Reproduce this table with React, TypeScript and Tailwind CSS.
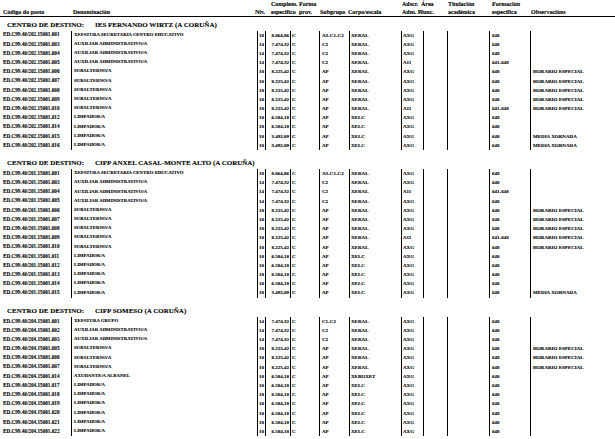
import React from "react";

type R = [string, string, string, string, string, string, string, string, string];

const S1: R[] = [
  ["001", "XEFATURA SECRETARÍA CENTRO EDUCATIVO", "18", "8.064,86", "A3-C1-C2", "XERAL", "AXG", "648", ""],
  ["003", "AUXILIAR ADMINISTRATIVO/A", "14", "7.474,32", "C2", "XERAL", "AXG", "648", ""],
  ["004", "AUXILIAR ADMINISTRATIVO/A", "14", "7.474,32", "C2", "XERAL", "AXG", "648", ""],
  ["005", "AUXILIAR ADMINISTRATIVO/A", "14", "7.474,32", "C2", "XERAL", "A11", "641-648", ""],
  ["006", "SUBALTERNO/A", "10", "8.225,42", "AP", "XERAL", "AXG", "648", "HORARIO ESPECIAL"],
  ["007", "SUBALTERNO/A", "10", "8.225,42", "AP", "XERAL", "AXG", "648", "HORARIO ESPECIAL"],
  ["008", "SUBALTERNO/A", "10", "8.225,42", "AP", "XERAL", "AXG", "648", "HORARIO ESPECIAL"],
  ["009", "SUBALTERNO/A", "10", "8.225,42", "AP", "XERAL", "AXG", "648", "HORARIO ESPECIAL"],
  ["010", "SUBALTERNO/A", "10", "8.225,42", "AP", "XERAL", "A11", "641-648", "HORARIO ESPECIAL"],
  ["012", "LIMPADOR/A", "10", "6.584,18", "AP", "XELC", "AXG", "648", ""],
  ["014", "LIMPADOR/A", "10", "6.584,18", "AP", "XELC", "AXG", "648", ""],
  ["015", "LIMPADOR/A", "10", "3.492,09", "AP", "XELC", "AXG", "648", "MEDIA XORNADA"],
  ["016", "LIMPADOR/A", "10", "3.492,09", "AP", "XELC", "AXG", "648", "MEDIA XORNADA"],
];

const S2: R[] = [
  ["001", "XEFATURA SECRETARÍA CENTRO EDUCATIVO", "18", "8.064,86", "A3-C1-C2", "XERAL", "AXG", "648", ""],
  ["003", "AUXILIAR ADMINISTRATIVO/A", "14", "7.474,32", "C2", "XERAL", "AXG", "648", ""],
  ["004", "AUXILIAR ADMINISTRATIVO/A", "14", "7.474,32", "C2", "XERAL", "A11", "641-648", ""],
  ["005", "AUXILIAR ADMINISTRATIVO/A", "14", "7.474,32", "C2", "XERAL", "AXG", "648", ""],
  ["006", "SUBALTERNO/A", "10", "8.225,42", "AP", "XERAL", "AXG", "648", "HORARIO ESPECIAL"],
  ["007", "SUBALTERNO/A", "10", "8.225,42", "AP", "XERAL", "AXG", "648", "HORARIO ESPECIAL"],
  ["008", "SUBALTERNO/A", "10", "8.225,42", "AP", "XERAL", "AXG", "648", "HORARIO ESPECIAL"],
  ["009", "SUBALTERNO/A", "10", "8.225,42", "AP", "XERAL", "A11", "641-648", "HORARIO ESPECIAL"],
  ["010", "SUBALTERNO/A", "10", "8.225,42", "AP", "XERAL", "AXG", "648", "HORARIO ESPECIAL"],
  ["011", "LIMPADOR/A", "10", "6.584,18", "AP", "XELC", "AXG", "648", ""],
  ["012", "LIMPADOR/A", "10", "6.584,18", "AP", "XELC", "AXG", "648", ""],
  ["013", "LIMPADOR/A", "10", "6.584,18", "AP", "XELC", "AXG", "648", ""],
  ["014", "LIMPADOR/A", "10", "6.584,18", "AP", "XELC", "AXG", "648", ""],
  ["015", "LIMPADOR/A", "10", "3.492,09", "AP", "XELC", "AXG", "648", "MEDIA XORNADA"],
];

const S3: R[] = [
  ["001", "XEFATURA GRUPO", "14", "7.474,32", "C1-C2", "XERAL", "AXG", "648", ""],
  ["002", "AUXILIAR ADMINISTRATIVO/A", "14", "7.474,32", "C2", "XERAL", "AXG", "648", ""],
  ["003", "AUXILIAR ADMINISTRATIVO/A", "14", "7.474,32", "C2", "XERAL", "AXG", "648", ""],
  ["005", "SUBALTERNO/A", "10", "8.225,42", "AP", "XERAL", "AXG", "648", "HORARIO ESPECIAL"],
  ["006", "SUBALTERNO/A", "10", "8.225,42", "AP", "XERAL", "AXG", "648", "HORARIO ESPECIAL"],
  ["007", "SUBALTERNO/A", "10", "8.225,42", "AP", "XERAL", "AXG", "648", "HORARIO ESPECIAL"],
  ["014", "AXUDANTE/A ALBANEL", "10", "6.584,18", "AP", "XEBOXET", "AXG", "648", ""],
  ["017", "LIMPADOR/A", "10", "6.584,18", "AP", "XELC", "AXG", "648", ""],
  ["018", "LIMPADOR/A", "10", "6.584,18", "AP", "XELC", "AXG", "648", ""],
  ["019", "LIMPADOR/A", "10", "6.584,18", "AP", "XELC", "AXG", "648", ""],
  ["020", "LIMPADOR/A", "10", "6.584,18", "AP", "XELC", "AXG", "648", ""],
  ["021", "LIMPADOR/A", "10", "6.584,18", "AP", "XELC", "AXG", "648", ""],
  ["022", "LIMPADOR/A", "10", "6.584,18", "AP", "XELC", "AXG", "648", ""],
];

function Row({ prefix, r }: { prefix: string; r: R }) {
  const cell = "h-full flex items-center border-l border-black whitespace-nowrap overflow-hidden";
  return (
    <div className="flex h-[9.2px] items-center text-[5px] leading-none">
      <div className="w-[71px] pl-[3px] whitespace-nowrap text-[5.2px]">
        {prefix}
        {r[0]}
      </div>
      <div className={`w-[186px] pl-[2px] text-[4.8px] ${cell}`}>{r[1]}</div>
      <div className={`w-[8px] justify-center ${cell}`}>{r[2]}</div>
      <div className={`w-[25px] justify-end pr-[1px] ${cell}`}>{r[3]}</div>
      <div className={`w-[29px] pl-[1px] ${cell}`}>C</div>
      <div className={`w-[30px] pl-[2px] ${cell}`}>{r[4]}</div>
      <div className={`w-[52px] pl-[1px] ${cell}`}>{r[5]}</div>
      <div className={`w-[22px] pl-[1px] ${cell}`}>{r[6]}</div>
      <div className={`w-[24px] ${cell}`}></div>
      <div className={`w-[42px] ${cell}`}></div>
      <div className={`w-[41px] pl-[2px] ${cell}`}>{r[7]}</div>
      <div className={`flex-1 pl-[2px] ${cell}`}>{r[8]}</div>
    </div>
  );
}

function Section({ name, prefix, rows, first }: { name: string; prefix: string; rows: R[]; first?: boolean }) {
  return (
    <div className={first ? "mt-[3.5px]" : "mt-[9px]"}>
      <div className="h-[10px] flex items-center pl-[7px] text-[7px] leading-none whitespace-nowrap">
        <span>CENTRO DE DESTINO:</span>
        <span className="ml-[11px]">{name}</span>
      </div>
      {rows.map((r) => (
        <Row key={r[0]} prefix={prefix} r={r} />
      ))}
    </div>
  );
}

export default function App() {
  return (
    <div className="w-[615px] h-[439px] overflow-hidden bg-white text-black font-bold font-['Liberation_Serif',serif] [-webkit-text-stroke:0.1px_black]">
      <div className="flex h-[17px] items-end border-b border-black text-[6px] leading-[8px] whitespace-nowrap">
        <div className="w-[73px] pl-[3px]">Código do posto</div>
        <div className="w-[182px]">Denominación</div>
        <div className="w-[16px]">Niv.</div>
        <div className="w-[28px]">
          Complem.
          <br />
          específico
        </div>
        <div className="w-[21px]">
          Forma
          <br />
          prov.
        </div>
        <div className="w-[28px]">Subgrupo</div>
        <div className="w-[54px]">Corpo/escala</div>
        <div className="w-[19px]">
          Adscr.
          <br />
          Adm. P.
        </div>
        <div className="w-[27px]">
          Área
          <br />
          func.
        </div>
        <div className="w-[44px]">
          Titulación
          <br />
          académica
        </div>
        <div className="w-[39px]">
          Formación
          <br />
          específica
        </div>
        <div>Observacións</div>
      </div>
      <Section first name="IES FERNANDO WIRTZ (A CORUÑA)" prefix="ED.C99.40/202.15001." rows={S1} />
      <Section name="CIFP ANXEL CASAL-MONTE ALTO (A CORUÑA)" prefix="ED.C99.40/201.15001." rows={S2} />
      <Section name="CIFP SOMESO (A CORUÑA)" prefix="ED.C99.40/204.15001." rows={S3} />
    </div>
  );
}
